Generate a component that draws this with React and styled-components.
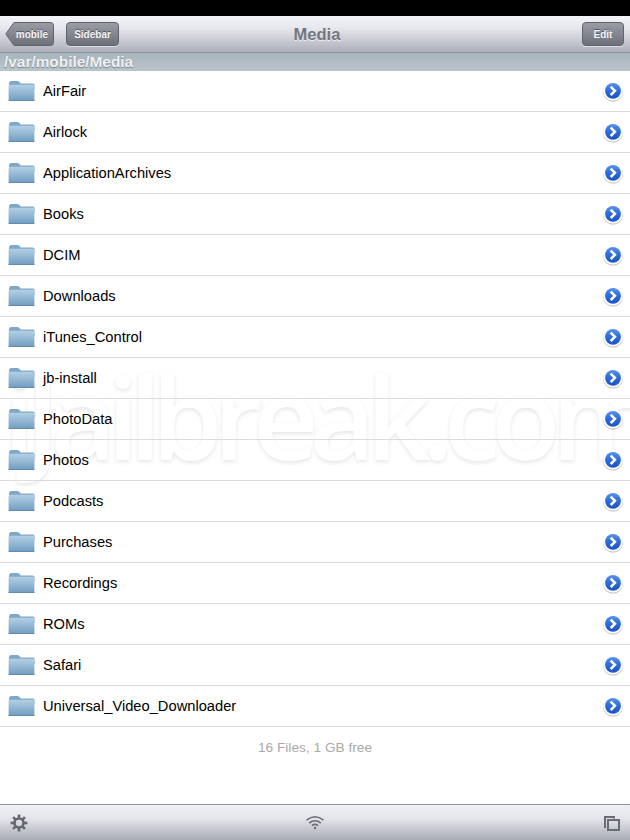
import React from 'react';
import styled, { createGlobalStyle } from 'styled-components';

const folders = [
  'AirFair', 'Airlock', 'ApplicationArchives', 'Books', 'DCIM', 'Downloads',
  'iTunes_Control', 'jb-install', 'PhotoData', 'Photos', 'Podcasts', 'Purchases',
  'Recordings', 'ROMs', 'Safari', 'Universal_Video_Downloader',
];

const Global = createGlobalStyle`
  html, body { margin: 0; padding: 0; background: #fff; }
  body { font-family: "Liberation Sans", Arial, sans-serif; }
`;

const Screen = styled.div`
  position: relative;
  width: 630px;
  height: 840px;
  overflow: hidden;
  display: flex;
  flex-direction: column;
  background: #fff;
`;

const StatusBar = styled.div`
  height: 16px;
  background: #000;
`;

const NavBar = styled.header`
  height: 36px;
  padding: 0 6px 0 5px;
  display: grid;
  grid-template-columns: 1fr auto 1fr;
  align-items: center;
  background: linear-gradient(#f3f4f7 0%, #e6e7eb 35%, #b9bbc6 85%, #aeb1bc 100%);
  border-bottom: 1px solid #8b929d;
`;

const NavLeft = styled.div`
  display: flex;
  gap: 12px;
  align-items: center;
`;

const NavRight = styled.div`
  display: flex;
  justify-content: flex-end;
`;

const Title = styled.h1`
  margin: 0 0 0 5px;
  font-size: 16.5px;
  line-height: 36px;
  font-weight: 700;
  color: #72767f;
  text-shadow: 0 1px 0 rgba(255, 255, 255, .7);
`;

const Button = styled.div`
  box-sizing: border-box;
  height: 24px;
  width: ${p => p.$w}px;
  display: flex;
  align-items: center;
  justify-content: center;
  border: 1px solid #5f636c;
  border-radius: 4px;
  background: linear-gradient(#9a9da6, #6c7079);
  box-shadow: 0 1px 0 rgba(255, 255, 255, .5);
  color: #f4f4f6;
  font-size: 10px;
  font-weight: 700;
  text-shadow: 0 -1px 0 rgba(0, 0, 0, .4);
`;

const BackWrap = styled.div`
  position: relative;
  width: 49px;
  height: 24px;
  display: flex;
  align-items: center;
  justify-content: flex-end;
  padding-right: 6px;
  box-sizing: border-box;
  color: #f4f4f6;
  font-size: 10px;
  font-weight: 700;
  text-shadow: 0 -1px 0 rgba(0, 0, 0, .4);

  svg {
    position: absolute;
    left: 0;
    top: 0;
  }
  span {
    position: relative;
  }
`;

const PathBar = styled.div`
  height: 18px;
  padding-left: 4px;
  background: linear-gradient(#a8b4bd, #bac5cb);
  color: #eef1f3;
  font-size: 15.4px;
  line-height: 17px;
  font-weight: 700;
  text-shadow: 0 1px 1px rgba(70, 80, 90, .55);
`;

const List = styled.ul`
  position: relative;
  z-index: 1;
  margin: 0;
  padding: 0;
  list-style: none;
`;

const Row = styled.li`
  box-sizing: border-box;
  height: 41px;
  padding: 0 6px 0 8px;
  display: flex;
  align-items: center;
  border-bottom: 1px solid #dcdcdc;
  color: #000;
  font-size: 14.7px;
`;

const Name = styled.span`
  flex: 1;
  margin-left: 8px;
`;

const Summary = styled.div`
  height: 41px;
  text-align: center;
  line-height: 41px;
  font-size: 13.7px;
  color: #a9a9a9;
`;

const Spacer = styled.div`
  flex: 1;
`;

const ToolBar = styled.footer`
  height: 35px;
  padding: 0 10px;
  display: grid;
  grid-template-columns: 1fr auto 1fr;
  align-items: center;
  border-top: 1px solid #8c90a0;
  background: linear-gradient(#f0f1f4 0%, #e3e4e9 40%, #a9acb6 100%);
`;

const ToolEnd = styled.div`
  display: flex;
  justify-content: flex-end;
`;

const Watermark = styled.div`
  position: absolute;
  z-index: 0;
  left: 3px;
  top: 341px;
  font-family: "Open Sans", sans-serif;
  font-weight: 600;
  font-size: 114px;
  line-height: 150px;
  letter-spacing: -9.4px;
  white-space: nowrap;
  color: #fff;
  text-shadow: 0 2px 4px rgba(0, 0, 0, .1);
  pointer-events: none;
`;

const FolderIcon = () => (
  <svg width="27" height="22" viewBox="0 0 27 22">
    <defs>
      <linearGradient id="folderFront" x1="0" y1="0" x2="0" y2="1">
        <stop offset="0" stopColor="#b4d0e4" />
        <stop offset="1" stopColor="#6f9cc1" />
      </linearGradient>
    </defs>
    <path d="M1 3.5Q1 1 3 1H9.5Q11 1 12 2.5L12.6 3.4H25Q26.5 3.4 26.5 5V10H1Z" fill="#7fa8c8" />
    <path d="M.6 5.8Q.6 4.8 1.8 4.8H25.2Q26.4 4.8 26.4 5.8V20Q26.4 21 25.2 21H1.8Q.6 21 .6 20Z" fill="url(#folderFront)" />
    <rect x=".6" y="20" width="25.8" height="1" fill="#5f8bb0" />
  </svg>
);

const DetailIcon = () => (
  <svg width="22" height="22" viewBox="0 0 22 22">
    <defs>
      <linearGradient id="detailFill" x1="0" y1="0" x2="0" y2="1">
        <stop offset="0" stopColor="#5b92ea" />
        <stop offset=".5" stopColor="#2c6bdb" />
        <stop offset="1" stopColor="#1c53c4" />
      </linearGradient>
    </defs>
    <circle cx="11" cy="11.8" r="10" fill="#000" opacity=".22" />
    <circle cx="11" cy="10.8" r="9.8" fill="#fff" />
    <circle cx="11" cy="10.8" r="7.9" fill="url(#detailFill)" />
    <path d="M8.7 6.6L12.9 10.8L8.7 15" fill="none" stroke="#fff" strokeWidth="2.6" />
  </svg>
);

const GearIcon = () => {
  const teeth = [0, 45, 90, 135];
  return (
    <svg width="18" height="18" viewBox="0 0 18 18">
      {teeth.map(a => (
        <g key={a} transform={`rotate(${a} 9 9)`}>
          <rect x="7.7" y=".6" width="2.6" height="4" fill="#63676f" />
          <rect x="7.7" y="13.4" width="2.6" height="4" fill="#63676f" />
        </g>
      ))}
      <circle cx="9" cy="9" r="4.5" fill="none" stroke="#63676f" strokeWidth="2.6" />
    </svg>
  );
};

const WifiIcon = () => (
  <svg width="20" height="15" viewBox="0 0 20 15" fill="none" stroke="#686c74" strokeWidth="1.6">
    <path d="M1.5 5.2Q10 -1.6 18.5 5.2" />
    <path d="M4.2 8Q10 3.4 15.8 8" />
    <path d="M6.9 10.6Q10 8.2 13.1 10.6" />
    <circle cx="10" cy="13" r="1.2" fill="#686c74" stroke="none" />
  </svg>
);

const WindowsIcon = () => (
  <svg width="17" height="16" viewBox="0 0 17 16" fill="none" stroke="#686c74" strokeWidth="2">
    <path d="M3 12H2V2H11V3.5" />
    <rect x="5" y="5" width="11" height="10" />
  </svg>
);

export default function App() {
  return (
    <>
      <Global />
      <Screen>
        <StatusBar />
        <NavBar>
          <NavLeft>
            <BackWrap>
              <svg width="49" height="24" viewBox="0 0 49 24">
                <defs>
                  <linearGradient id="backFill" x1="0" y1="0" x2="0" y2="1">
                    <stop offset="0" stopColor="#9a9da6" />
                    <stop offset="1" stopColor="#6c7079" />
                  </linearGradient>
                </defs>
                <path d="M.8 12L9 .5H45.5Q48.5 .5 48.5 3.5V20.5Q48.5 23.5 45.5 23.5H9Z" fill="url(#backFill)" stroke="#5f636c" />
              </svg>
              <span>mobile</span>
            </BackWrap>
            <Button $w={53}>Sidebar</Button>
          </NavLeft>
          <Title>Media</Title>
          <NavRight>
            <Button $w={42}>Edit</Button>
          </NavRight>
        </NavBar>
        <PathBar>/var/mobile/Media</PathBar>
        <List>
          {folders.map(f => (
            <Row key={f}>
              <FolderIcon />
              <Name>{f}</Name>
              <DetailIcon />
            </Row>
          ))}
        </List>
        <Summary>16 Files, 1 GB free</Summary>
        <Spacer />
        <ToolBar>
          <GearIcon />
          <WifiIcon />
          <ToolEnd>
            <WindowsIcon />
          </ToolEnd>
        </ToolBar>
        <Watermark>iJailbreak.com</Watermark>
      </Screen>
    </>
  );
}
